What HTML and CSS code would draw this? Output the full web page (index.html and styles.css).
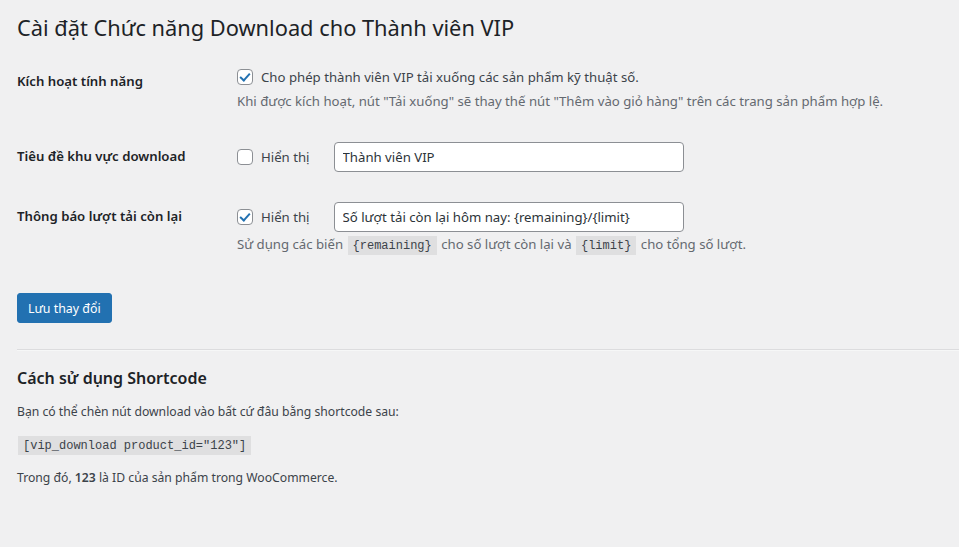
FILE: index.html
```html
<!DOCTYPE html>
<html lang="vi">
<head>
    <meta charset="UTF-8">
    <meta name="viewport" content="width=device-width, initial-scale=1.0">
    <title>Cài đặt Chức năng Download cho Thành viên VIP</title>
    <link rel="stylesheet" href="styles.css">
</head>
<body>
    <div class="wrap">
        <h1>Cài đặt Chức năng Download cho Thành viên VIP</h1>

        <form>
            <div class="form-row row-enable">
                <div class="row-label">Kích hoạt tính năng</div>
                <div class="row-field">
                    <label class="check-line">
                        <input type="checkbox" checked>
                        <span>Cho phép thành viên VIP tải xuống các sản phẩm kỹ thuật số.</span>
                    </label>
                    <p class="description">Khi được kích hoạt, nút "Tải xuống" sẽ thay thế nút "Thêm vào giỏ hàng" trên các trang sản phẩm hợp lệ.</p>
                </div>
            </div>

            <div class="form-row">
                <div class="row-label">Tiêu đề khu vực download</div>
                <div class="row-field">
                    <div class="inline-field">
                        <label class="check-line">
                            <input type="checkbox">
                            <span>Hiển thị</span>
                        </label>
                        <input type="text" class="regular-text" value="Thành viên VIP">
                    </div>
                </div>
            </div>

            <div class="form-row">
                <div class="row-label">Thông báo lượt tải còn lại</div>
                <div class="row-field">
                    <div class="inline-field">
                        <label class="check-line">
                            <input type="checkbox" checked>
                            <span>Hiển thị</span>
                        </label>
                        <input type="text" class="regular-text" value="Số lượt tải còn lại hôm nay: {remaining}/{limit}">
                    </div>
                    <p class="description">Sử dụng các biến <code>{remaining}</code> cho số lượt còn lại và <code>{limit}</code> cho tổng số lượt.</p>
                </div>
            </div>

            <p class="submit">
                <button type="button" class="button-primary">Lưu thay đổi</button>
            </p>
        </form>

        <hr>

        <h2>Cách sử dụng Shortcode</h2>
        <p>Bạn có thể chèn nút download vào bất cứ đâu bằng shortcode sau:</p>
        <p><code>[vip_download product_id="123"]</code></p>
        <p>Trong đó, <strong>123</strong> là ID của sản phẩm trong WooCommerce.</p>
    </div>
</body>
</html>
```

FILE: styles.css
```css
body {
    margin: 0;
    background-color: #f0f0f1;
    color: #3c434a;
    font-family: "Noto Sans", sans-serif;
    font-size: 12.2px;
    line-height: 1.4;
}

.wrap {
    padding: 4px 0 0 17px;
}

h1 {
    margin: 0;
    padding: 9px 0 4px;
    font-size: 21.8px;
    font-weight: 400;
    line-height: 30px;
    color: #1d2327;
}

form {
    margin-top: 5px;
    padding-right: 10px;
}

.form-row {
    display: grid;
    grid-template-columns: 210px 1fr;
}

.row-label {
    padding: 20px 0;
    font-size: 13.2px;
    font-weight: 600;
    line-height: 18px;
    color: #1d2327;
}

.row-field {
    padding: 15px 10px;
    font-size: 13.2px;
}

.check-line {
    display: inline-flex;
    align-items: center;
    gap: 8px;
    line-height: 20px;
    color: #3c434a;
}

.check-line input {
    appearance: none;
    margin: 0;
    width: 16px;
    height: 16px;
    border: 1px solid #8c8f94;
    border-radius: 4px;
    background: #fff;
    position: relative;
    flex-shrink: 0;
}

.check-line input:checked::before {
    content: "";
    position: absolute;
    left: 4px;
    top: 1px;
    width: 4px;
    height: 8px;
    border-right: 2px solid #2271b1;
    border-bottom: 2px solid #2271b1;
    transform: rotate(42deg);
}

.inline-field {
    display: flex;
    align-items: center;
    gap: 24px;
}

.regular-text {
    width: 350px;
    height: 30px;
    box-sizing: border-box;
    padding: 0 8px;
    border: 1px solid #8c8f94;
    border-radius: 4px;
    background: #fff;
    font-family: inherit;
    font-size: 13.2px;
    color: #2c3338;
}

.description {
    margin: 2px 0 0;
    font-size: 13.2px;
    line-height: 21px;
    color: #646970;
}

code {
    padding: 3px 5px 2px;
    margin: 0 1px;
    background: rgba(0, 0, 0, 0.07);
    font-family: "Liberation Mono", monospace;
    font-size: 12px;
    color: #3c434a;
}

.submit {
    margin: 11px 0 0;
    padding-top: 10px;
}

.button-primary {
    height: 30px;
    padding: 0 10px;
    border: 1px solid #2271b1;
    border-radius: 3px;
    background: #2271b1;
    color: #fff;
    font-family: inherit;
    font-size: 12.4px;
}

hr {
    margin: 26px 0 0;
    border: 0;
    border-top: 1px solid #dcdcde;
    border-bottom: 1px solid #f6f7f7;
}

h2 {
    margin: 16px 0 0;
    font-size: 16px;
    font-weight: 600;
    line-height: 22px;
    color: #1d2327;
}

.wrap > p {
    margin: 15px 0 0;
}

.wrap > h2 + p {
    margin-top: 14px;
}

.wrap > p strong {
    font-weight: 600;
}
```
